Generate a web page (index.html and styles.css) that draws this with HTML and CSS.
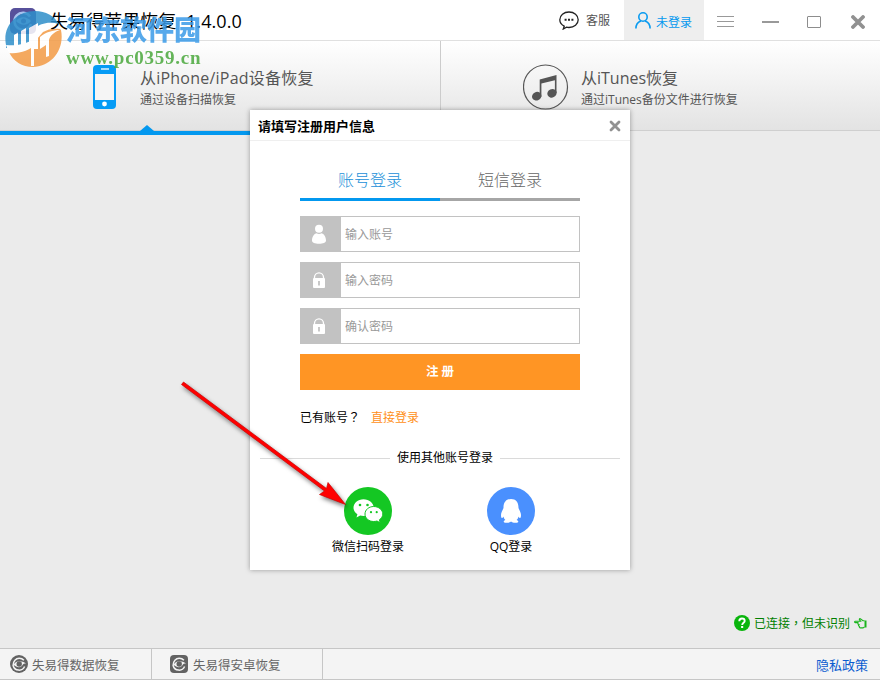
FILE: index.html
```html
<!DOCTYPE html>
<html lang="zh-CN">
<head>
  <meta charset="UTF-8">
  <title>失易得苹果恢复</title>
  <link rel="stylesheet" href="styles.css">
</head>
<body>
  <div class="window">
    <header class="titlebar">
      <svg class="app-logo" width="26" height="26" viewBox="0 0 26 26">
        <rect width="26" height="26" rx="5" fill="#57509b"/>
        <path d="M20 8.500A8.500 8.500 0 1 0 21 16" fill="none" stroke="#a9c2ee" stroke-width="2.500"/>
        <path d="M6 13c4-5 10-5 15 0-4 5-10 5-15 0z" fill="#a9c2ee"/>
        <circle cx="13.500" cy="13" r="2.500" fill="#57509b"/>
      </svg>
      <h1 class="app-title">失易得苹果恢复&nbsp; 1.4.0.0</h1>
      <a class="service">
        <svg width="20" height="19" viewBox="0 0 20 19" fill="none" stroke="#222" stroke-width="1.3">
          <path d="M5.2 15.2C2.5 13.8.8 11.500.8 8.800.8 4.500 4.800 1 10 1s9.200 3.500 9.200 7.800-4 7.700-9.200 7.700c-.9 0-1.700-.1-2.500-.3L4.300 18z"/>
          <path d="M5.600 8.800h2M9 8.800h2M12.400 8.800h2" stroke-width="2"/>
        </svg>
        <span>客服</span>
      </a>
      <a class="account">
        <svg width="16" height="17" viewBox="0 0 16 17" fill="none" stroke="#0a9bf0" stroke-width="1.600">
          <circle cx="8" cy="5" r="4.200"/>
          <path d="M.9 16.500c0-4 2.300-6.700 5-7.600M15.100 16.500c0-4-2.300-6.700-5-7.600"/>
        </svg>
        <span>未登录</span>
      </a>
      <div class="win-buttons">
        <svg width="17" height="12" viewBox="0 0 17 12"><path d="M0 .5h17M0 5.500h17M0 10.500h17" stroke="#999"/></svg>
        <svg width="17" height="12" viewBox="0 0 17 12"><path d="M0 6h17" stroke="#999" stroke-width="2"/></svg>
        <svg width="14" height="12" viewBox="0 0 14 12"><rect x=".5" y=".5" width="13" height="11" rx=".5" fill="none" stroke="#8d8d8d"/></svg>
        <svg width="14" height="14" viewBox="0 0 14 14"><path d="M2 2l10 10M12 2L2 12" stroke="#919191" stroke-width="3.800" stroke-linecap="round"/></svg>
      </div>
    </header>

    <nav class="modes">
      <a class="mode mode-device active">
        <svg width="23" height="44" viewBox="0 0 23 44">
          <rect width="23" height="44" rx="4" fill="#069bf5"/>
          <rect x="2" y="9" width="19" height="26" fill="#f5f5f5"/>
          <path d="M8 4h8" stroke="#fff" stroke-width="1.300"/>
          <circle cx="11.500" cy="39" r="2.400" fill="#fff"/>
        </svg>
        <div class="mode-text">
          <h2>从iPhone/iPad设备恢复</h2>
          <p>通过设备扫描恢复</p>
        </div>
      </a>
      <a class="mode mode-itunes">
        <svg width="46" height="46" viewBox="0 0 46 46">
          <circle cx="22.500" cy="23" r="22" fill="none" stroke="#555" stroke-width="1.200"/>
          <path d="M16.700 15.500l16.800-4.500v18h-1.600V16.200l-13.500 3.400V33h-1.700z" fill="#555"/>
          <ellipse cx="13.700" cy="32.200" rx="4.800" ry="4.200" transform="rotate(-25 13.700 32.200)" fill="#555"/>
          <ellipse cx="29" cy="29.300" rx="4.800" ry="4.200" transform="rotate(-25 29 29.300)" fill="#555"/>
        </svg>
        <div class="mode-text">
          <h2>从iTunes恢复</h2>
          <p>通过iTunes备份文件进行恢复</p>
        </div>
      </a>
    </nav>

    <main class="workspace">
      <div class="device-status">
        <svg width="16" height="16" viewBox="0 0 16 16">
          <circle cx="8" cy="8" r="8" fill="#0ab50d"/>
          <path d="M5.300 6.200C5.300 4.400 6.500 3.500 8 3.500s2.700.9 2.700 2.400c0 1.800-2.500 2-2.500 4" fill="none" stroke="#fff" stroke-width="1.900"/>
          <rect x="7.100" y="11" width="2.100" height="2" fill="#fff"/>
        </svg>
        <span>已连接<span class="wide-mark" lang="zh-TW">，</span>但未识别</span>
        <svg width="13" height="11" viewBox="0 0 13 11" fill="none" stroke="#1ab51d" stroke-width="1.100">
          <path d="M10.500 2.800H9L6.300.8C5.500.4 5 1.200 5.600 1.900l1 1.300H1.300C.4 3.200.4 4.600 1.300 4.600h3.200M4.500 4.600c-1 .4-.8 1.800.3 1.900-.6.600-.3 1.700.6 1.700-.3.800.1 1.700 1 1.700H9l1.500-.9"/>
          <path d="M11.500 2.500v7" stroke-width="2"/>
        </svg>
      </div>
    </main>

    <footer class="statusbar">
      <a class="product product-data">
        <svg width="18" height="18" viewBox="0 0 18 18">
          <circle cx="9" cy="9" r="9" fill="#636363"/>
          <path d="M14.600 11.500A6.100 6.100 0 0 1 3.100 10.500C3 6 6 3.200 9.200 3.200c2 0 3.600.8 4.700 2" fill="none" stroke="#f4f4f4" stroke-width="1.500"/>
          <path d="M3.500 9.500C6 5.500 11.500 5 16 8.500c-1.800 0-2.800.3-3.300 1.300C11.500 13 6.500 13 3.500 9.500z" fill="#f4f4f4"/>
          <circle cx="9.200" cy="9" r="2.700" fill="#636363"/>
        </svg>
        <span>失易得数据恢复</span>
      </a>
      <a class="product product-android">
        <svg width="18" height="18" viewBox="0 0 18 18">
          <rect width="18" height="18" rx="4" fill="#636363"/>
          <path d="M14.600 11.500A6.100 6.100 0 0 1 3.100 10.500C3 6 6 3.200 9.200 3.200c2 0 3.600.8 4.700 2" fill="none" stroke="#f4f4f4" stroke-width="1.500"/>
          <path d="M3.500 9.500C6 5.500 11.500 5 16 8.500c-1.800 0-2.800.3-3.300 1.300C11.500 13 6.500 13 3.500 9.500z" fill="#f4f4f4"/>
          <circle cx="9.200" cy="9" r="2.700" fill="#636363"/>
        </svg>
        <span>失易得安卓恢复</span>
      </a>
      <a class="privacy">隐私政策</a>
    </footer>

    <section class="dialog">
      <div class="dialog-head">
        <h3>请填写注册用户信息</h3>
        <svg width="12" height="12" viewBox="0 0 12 12"><path d="M2 2l8 8M10 2l-8 8" stroke="#919191" stroke-width="2.800" stroke-linecap="round"/></svg>
      </div>
      <form class="register">
        <div class="tabs">
          <a class="tab active">账号登录</a>
          <a class="tab">短信登录</a>
        </div>
        <label class="field">
          <span class="field-icon">
            <svg width="16" height="20" viewBox="0 0 16 20" fill="#fff">
              <circle cx="8" cy="4.800" r="4"/>
              <path d="M1 16.500C1 12.500 3.500 9.500 5.500 9.300c1.500.9 3.500.9 5 0 2 .2 4.500 3.200 4.500 7.200 0 2.200-3 3.200-7 3.200s-7-1-7-3.200z"/>
            </svg>
          </span>
          <input type="text" placeholder="输入账号">
        </label>
        <label class="field">
          <span class="field-icon">
            <svg width="12" height="16" viewBox="0 0 12 16">
              <path d="M1.500 6.500V5.300a4.500 4.500 0 0 1 9 0v1.200" fill="none" stroke="#fff" stroke-width="1.300"/>
              <rect y="6" width="12" height="10" rx="1" fill="#fff"/>
              <path d="M6 9v4.500" stroke="#bbb" stroke-width="1.600"/>
            </svg>
          </span>
          <input type="text" placeholder="输入密码">
        </label>
        <label class="field">
          <span class="field-icon">
            <svg width="12" height="16" viewBox="0 0 12 16">
              <path d="M1.500 6.500V5.300a4.500 4.500 0 0 1 9 0v1.200" fill="none" stroke="#fff" stroke-width="1.300"/>
              <rect y="6" width="12" height="10" rx="1" fill="#fff"/>
              <path d="M6 9v4.500" stroke="#bbb" stroke-width="1.600"/>
            </svg>
          </span>
          <input type="text" placeholder="确认密码">
        </label>
        <button type="button" class="submit">注 册</button>
        <p class="has-account">已有账号<span class="wide-mark" lang="zh-TW">？</span><a>直接登录</a></p>
      </form>
      <div class="divider"><span>使用其他账号登录</span></div>
      <div class="socials">
        <a class="social">
          <svg width="48" height="48" viewBox="0 0 48 48">
            <circle cx="24" cy="24" r="24" fill="#14c723"/>
            <path d="M19.500 12.200c-5.700 0-10 3.800-10 8.500 0 2.700 1.500 5 3.900 6.500l-.9 3.400 3.700-2.100c1 .3 2.100.5 3.300.5 5.700 0 10.200-3.700 10.200-8.300s-4.500-8.500-10.200-8.500z" fill="#fff"/>
            <path d="M29.700 19.500c-4.900 0-8.700 3.300-8.700 7.500s3.800 7.500 8.700 7.500c1.200 0 2.300-.2 3.300-.5l3.200 1.800-.8-3c2.100-1.400 3.400-3.500 3.400-5.800 0-4.200-4.200-7.500-9.100-7.500z" fill="#fff" stroke="#14c723"/>
            <g fill="#14c723"><circle cx="16" cy="18" r="1.300"/><circle cx="23.500" cy="18" r="1.300"/><circle cx="27" cy="25.200" r="1.100"/><circle cx="32.700" cy="25.200" r="1.100"/></g>
          </svg>
          <span>微信扫码登录</span>
        </a>
        <a class="social">
          <svg width="48" height="48" viewBox="0 0 48 48">
            <circle cx="24" cy="24" r="24" fill="#4a90fe"/>
            <path d="M24 12c-5 0-7.600 3.500-7.500 9-.9 2.400-2.500 4.500-2.500 7 0 2.600.7 3.300 1.200 3 .7-.3 1-1.200 1.300-1.600.2 1.400.9 2.600 1.900 3.500-1.200.4-1.900 1-1.600 2 .3 1.100 5.500 1.400 7.200-.3 1.700 1.700 6.900 1.400 7.200.3.300-1-.4-1.600-1.600-2 1-.9 1.700-2.100 1.900-3.500.3.400.6 1.300 1.300 1.600.5.300 1.200-.4 1.200-3 0-2.500-1.600-4.600-2.500-7 .1-5.500-2.500-9-7.500-9z" fill="#fff"/>
          </svg>
          <span>QQ登录</span>
        </a>
      </div>
    </section>

    <div class="watermark">
      <svg width="58" height="58" viewBox="0 0 58 58">
        <path d="M2 35C-2 16 13 1 31 1c11 0 19 5 24 13C44 11 36 14 31 18V36L15 38H2z" fill="#2f8fca"/>
        <path d="M57 20c4 20-10 37-28 37C18 57 9 51 5 42c8 0 16-2 22-6l12-14c5-3 11-4 17-3z" fill="#f39b45"/>
        <path d="M2 35c9 1 15 0 25-4l7-6v8C25 41 15 44 5 43z" fill="#fff"/>
        <path d="M10 25l4-2.500v14H10zM17 21l5-3v17h-5z" fill="#fff"/>
        <path d="M25 18l9-5v26h-4v17h-3V38h-2zM36 27c6-5 13-7 20-7-6 2-10 6-11 10v16l-3 1V35l-6 4z" fill="#fff"/>
      </svg>
      <div class="watermark-text">
        <span class="site-name">河东软件园</span>
        <span class="site-url">www.pc0359.cn</span>
      </div>
    </div>

    <svg class="pointer" width="180" height="140" viewBox="0 0 180 140">
      <path d="M5.500 5L3.500 7.500 146.500 114l-5 3.500 26 10-17.500-22-1.500 6z" fill="#f00" stroke="#c00" stroke-width=".7" stroke-linejoin="round"/>
    </svg>
  </div>
</body>
</html>
```
FILE: styles.css
```css
:root {
  --blue: #0398ef;
  --orange: #ff9524;
  --gray: #c2c2c2;
}
* { box-sizing: border-box; margin: 0; padding: 0; }
body {
  font-family: "Open Sans", "Noto Sans CJK SC", sans-serif;
  font-size: 12px;
  color: #000;
  overflow: hidden;
}
svg { display: block; flex-shrink: 0; }
.wide-mark {
  font-family: "Noto Sans CJK TC", sans-serif;
  line-height: 1;
}
.window {
  position: relative;
  width: 880px;
  height: 680px;
  display: flex;
  flex-direction: column;
  background: #ebebeb;
}

/* title bar */
.titlebar {
  height: 41px;
  display: flex;
  align-items: center;
  background: #fff;
  border-bottom: 1px solid #e0e0e0;
}
.app-logo { margin: 2px 14px 0 10px; }
.app-title {
  flex: 1;
  font-size: 18px;
  font-weight: normal;
  letter-spacing: .07px;
  white-space: nowrap;
}
.service {
  display: flex;
  align-items: center;
  gap: 7px;
  margin-right: 14px;
  color: #555;
}
.account {
  width: 80px;
  height: 40px;
  display: flex;
  align-items: center;
  gap: 5px;
  padding: 4px 0 0 11px;
  background: #eee;
  color: var(--blue);
}
.account svg { margin-top: -3px; }
.win-buttons {
  width: 176px;
  height: 40px;
  display: flex;
  align-items: center;
  justify-content: space-between;
  padding: 4px 15px 0 13px;
}
.win-buttons svg:nth-child(2),
.win-buttons svg:nth-child(3) { margin-left: -2px; }

/* recovery modes */
.modes {
  height: 90px;
  display: flex;
  background: linear-gradient(#fff, #e3e3e3);
  border-bottom: 1px solid #cfcfcf;
}
.mode {
  position: relative;
  width: 440px;
  display: flex;
  align-items: flex-start;
  color: #555;
}
.mode-text { padding-top: 1px; }
.mode-device {
  padding: 24px 0 0 93px;
  gap: 24px;
}
.mode-device h2 { letter-spacing: .22px; }
.mode-itunes {
  padding: 23px 0 0 82px;
  gap: 12px;
  border-left: 1px solid #ccc;
}
.mode-itunes .mode-text { padding-top: 2px; }
.mode.active::before {
  content: "";
  position: absolute;
  left: 0;
  bottom: -5px;
  width: 100%;
  height: 4px;
  background: var(--blue);
}
.mode.active::after {
  content: "";
  position: absolute;
  left: 140px;
  bottom: -1px;
  border: 7px solid transparent;
  border-top: none;
  border-bottom: 6px solid var(--blue);
}
.mode h2 {
  font-size: 16px;
  line-height: 24px;
  font-weight: normal;
}
.mode p { line-height: 20px; }

.workspace {
  flex: 1;
  display: flex;
  align-items: flex-end;
  justify-content: flex-end;
  padding: 0 13px 16px 0;
}
.device-status {
  display: flex;
  align-items: center;
  gap: 4px;
  color: #008000;
}

/* bottom bar */
.statusbar {
  height: 32px;
  display: flex;
  background: #f4f4f4;
  border-top: 1px solid #c6c6c6;
  border-bottom: 1px solid #c6c6c6;
}
.product {
  display: flex;
  align-items: center;
  gap: 4px;
  border-right: 1px solid #c6c6c6;
  color: #666;
  font-size: 12.5px;
}
.product-data { width: 152px; padding-left: 10px; }
.product-android { width: 171px; padding-left: 18px; gap: 5px; }
.privacy {
  margin: 0 12px 0 auto;
  font-size: 13px;
  line-height: 33px;
  color: #0a5cd0;
}

/* register dialog */
.dialog {
  position: absolute;
  left: 250px;
  top: 110px;
  width: 380px;
  height: 460px;
  background: #fff;
  box-shadow: 0 0 5px rgba(0, 0, 0, .35);
}
.dialog-head {
  height: 31px;
  display: flex;
  align-items: center;
  justify-content: space-between;
  padding: 1px 9px 0 8px;
  border-bottom: 1px solid #efefef;
}
.dialog-head h3 {
  margin-top: -1px;
  font-size: 13px;
}
.register {
  display: flex;
  flex-direction: column;
  padding: 19px 50px 0;
}
.tabs { display: flex; margin-bottom: 15px; }
.tab {
  flex: 1;
  height: 41px;
  line-height: 40px;
  border-bottom: 3px solid #a6a6a6;
  text-align: center;
  font-size: 16px;
  font-weight: 300;
  color: #666;
}
.tab.active {
  color: #1a8fd8;
  border-color: var(--blue);
}
.field {
  height: 36px;
  display: flex;
  margin-bottom: 10px;
  border: 1px solid var(--gray);
}
.field-icon {
  width: 40px;
  display: flex;
  align-items: center;
  justify-content: center;
  padding-right: 4px;
  background: var(--gray);
}
.field input {
  flex: 1;
  min-width: 0;
  padding: 0 4px;
  border: none;
  outline: none;
  font: inherit;
}
.field input::placeholder { color: #999; }
.submit {
  height: 36px;
  padding-bottom: 3px;
  border: none;
  background: var(--orange);
  color: #fff;
  font: bold 12.5px "Open Sans", "Noto Sans CJK SC", sans-serif;
}
.has-account {
  height: 20px;
  margin-top: 18px;
  line-height: 20px;
}
.has-account a {
  margin-left: 11px;
  color: #ff9020;
}
.divider {
  display: grid;
  grid-template-columns: 130px auto 120px;
  align-items: center;
  justify-items: center;
  margin: 20px 10px 0;
  line-height: 20px;
}
.divider::before,
.divider::after {
  content: "";
  width: 100%;
  height: 1px;
  background: #dadada;
}
.socials {
  display: flex;
  gap: 63px;
  padding: 19px 0 0 78px;
}
.social {
  width: 80px;
  display: flex;
  flex-direction: column;
  align-items: center;
  line-height: 24px;
}

/* site mark over the window */
.watermark {
  position: absolute;
  left: 4px;
  top: 10px;
  display: flex;
  gap: 4px;
  opacity: .85;
}
.watermark-text {
  display: flex;
  flex-direction: column;
  white-space: nowrap;
}
.site-name {
  font-size: 27px;
  font-weight: 900;
  line-height: 39px;
  color: #3a9be8;
}
.site-url {
  font: bold 19px/18px "Liberation Serif", serif;
  letter-spacing: .75px;
  color: #4aa83c;
}
.pointer {
  position: absolute;
  left: 178px;
  top: 377px;
  filter: drop-shadow(2px 3px 2px rgba(0, 0, 0, .5));
}
```
